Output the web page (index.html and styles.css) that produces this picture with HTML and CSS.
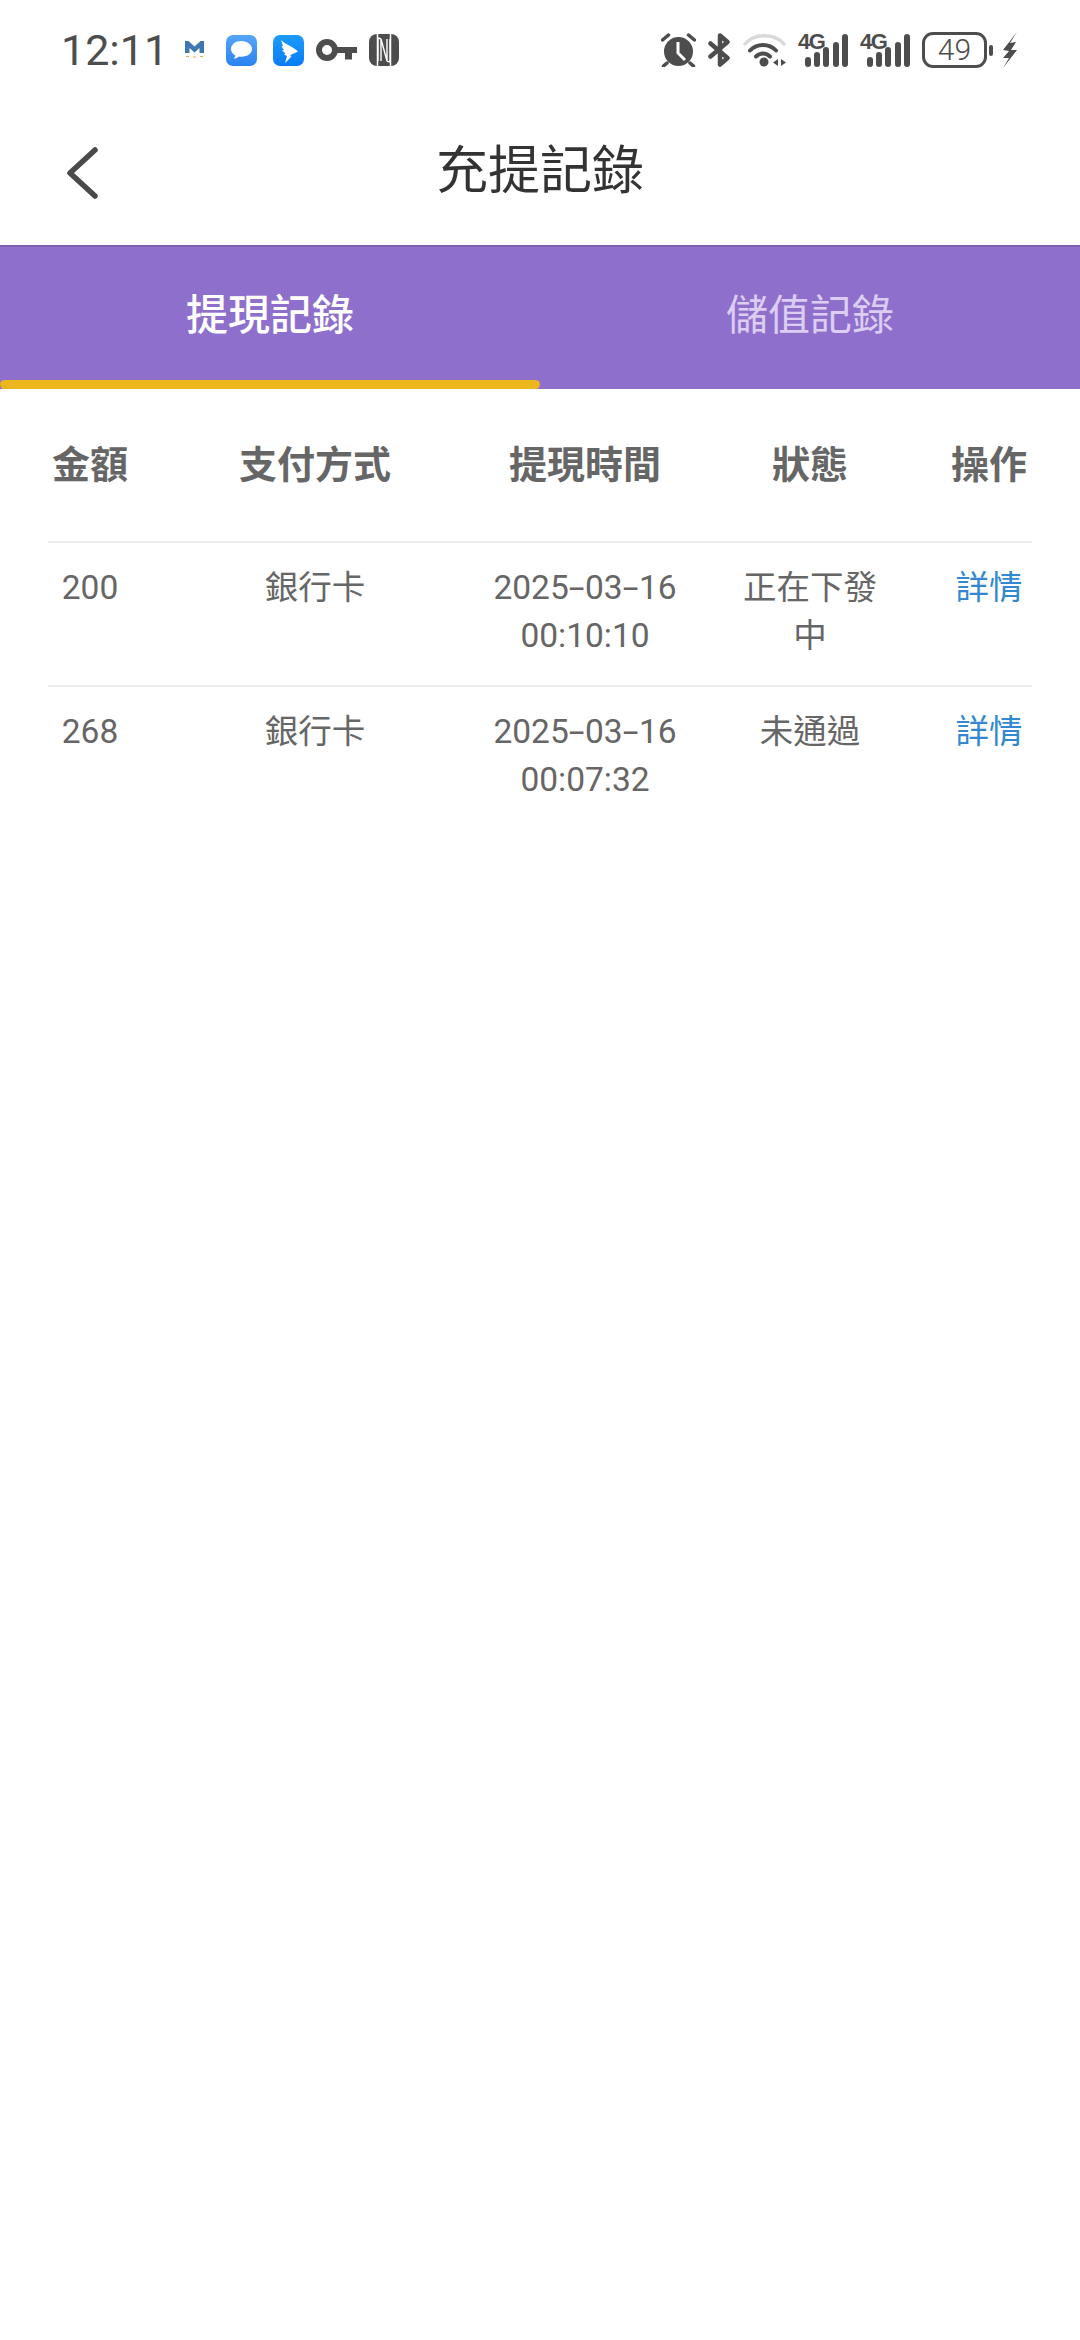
FILE: index.html
```html
<!DOCTYPE html>
<html lang="zh-Hant">
<head>
<meta charset="utf-8">
<title>充提記錄</title>
<link rel="stylesheet" href="styles.css">
</head>
<body>
<div class="status">
  <div class="status-left">
    <span class="clock">12:11</span>
    <svg class="ic-m" viewBox="0 0 19 18"><path d="M0 0h3.500L9.500 5.500 15.500 0H19v12h-4.500V7L9.500 11.500 4.500 7v5H0z" fill="#3f78b0"/><path d="M1 15.500h3M15 15.500h3M8 16h3" stroke="#e2b04a" stroke-width="1"/></svg>
    <svg class="ic-app" viewBox="0 0 31 31"><defs><linearGradient id="g1" x1="0" y1="0" x2="0" y2="1"><stop offset="0" stop-color="#55a5fa"/><stop offset="1" stop-color="#2a83f0"/></linearGradient></defs><rect width="31" height="31" rx="7" fill="url(#g1)"/><path d="M15.500 6C9.500 6 5 9.400 5 14c0 2.800 1.700 5.100 4.300 6.500-.2 1.300-.9 2.500-1.800 3.300 2.300-.2 4.200-1.100 5.500-2.300.8.200 1.600.2 2.500.2 6 0 10.500-3.400 10.500-7.700S21.500 6 15.500 6z" fill="#fff"/></svg>
    <svg class="ic-app" viewBox="0 0 31 31"><defs><linearGradient id="g2" x1="0" y1="0" x2="0" y2="1"><stop offset="0" stop-color="#1c9bfb"/><stop offset="1" stop-color="#0a7cf4"/></linearGradient></defs><rect width="31" height="31" rx="7" fill="url(#g2)"/><path d="M8 5c4 4.500 12 6.500 17 11.500l-6.500 3-1.500 1.500 1.500.5L12 28l2-7-3-1.500 1.500-1-3.500-3 2-.5-2.500-3.500 1.500-.5z" fill="#fff"/></svg>
    <svg class="ic-key" viewBox="0 0 41 24"><circle cx="11" cy="12" r="8" fill="none" stroke="#4d4d4d" stroke-width="6"/><path d="M19 9h22v6h-5v6.500h-7V15H19z" fill="#4d4d4d"/></svg>
    <svg class="ic-nfc" viewBox="0 0 30 32"><rect width="30" height="32" rx="8" fill="#4d4d4d"/><path d="M8.500 0v32M21.500 0v32" stroke="#fff" stroke-width="1.500"/><path d="M12 5v22M18 5v22M12 5l6 22M9 27V6q0-3 3-1M21 5v21q0 3-3 1" fill="none" stroke="#fff" stroke-width="1.400"/></svg>
  </div>
  <div class="status-right">
    <svg class="ic-alarm" viewBox="0 0 35 34"><circle cx="17.500" cy="18.500" r="14.500" fill="#4d4d4d"/><path d="M17 9v11l7 7" fill="none" stroke="#fff" stroke-width="3"/><path d="M1.500 7l6-5M33.500 7l-6-5M6 30l-3.500 3M29 30l3.500 3" stroke="#4d4d4d" stroke-width="3.500" stroke-linecap="round"/></svg>
    <svg class="ic-bt" viewBox="0 0 22 34"><path d="M2.500 10.500L19.500 25l-7.500 6.500V2.500L19.500 9 2.500 23.500" fill="none" stroke="#4d4d4d" stroke-width="4.500" stroke-linejoin="round" stroke-linecap="round"/></svg>
    <svg class="ic-wifi" viewBox="0 0 43 34"><path d="M2 11C11 0 32 0 41 11" fill="none" stroke="#d9d9d9" stroke-width="3.500" stroke-linecap="round"/><path d="M7 17.500c7-7.500 19-7.500 26 0M13 23.500c4-4 10-4 14 0" fill="none" stroke="#4d4d4d" stroke-width="4" stroke-linecap="round"/><circle cx="21" cy="29" r="4.500" fill="#4d4d4d"/><path d="M35 26v7l-5-3.500zM38 26v7l5-3.500z" fill="#4d4d4d"/></svg>
    <span class="net"><span class="net-label">4G</span><svg class="ic-bars" viewBox="0 0 50 34"><rect x="7" y="24" width="6" height="10" rx="3" fill="#4d4d4d"/><rect x="16" y="19" width="6" height="15" rx="3" fill="#4d4d4d"/><rect x="25" y="14" width="6" height="20" rx="3" fill="#4d4d4d"/><rect x="35" y="9" width="6" height="25" rx="3" fill="#4d4d4d"/><rect x="44" y="1" width="6" height="33" rx="3" fill="#4d4d4d"/></svg></span>
    <span class="net"><span class="net-label">4G</span><svg class="ic-bars" viewBox="0 0 50 34"><rect x="7" y="24" width="6" height="10" rx="3" fill="#4d4d4d"/><rect x="16" y="19" width="6" height="15" rx="3" fill="#4d4d4d"/><rect x="25" y="14" width="6" height="20" rx="3" fill="#4d4d4d"/><rect x="35" y="9" width="6" height="25" rx="3" fill="#4d4d4d"/><rect x="44" y="1" width="6" height="33" rx="3" fill="#4d4d4d"/></svg></span>
    <span class="battery"><span class="batt-body">49</span><span class="batt-tip"></span></span>
    <svg class="ic-bolt" viewBox="0 0 15 36"><path d="M15 0L1 18l6 1-6 7h6L1 36l14-18H9l5-8-6 1z" fill="#4d4d4d"/></svg>
  </div>
</div>

<header class="nav">
  <svg class="back" viewBox="0 0 36 60"><path d="M31 6L6 29l25 23" fill="none" stroke="#4a4a4a" stroke-width="5.500" stroke-linecap="round" stroke-linejoin="round"/></svg>
  <h1 class="title">充提記錄</h1>
</header>

<nav class="tabs">
  <div class="tab active">提現記錄</div>
  <div class="tab">儲值記錄</div>
</nav>

<section class="table">
  <div class="row head">
    <div class="c1">金額</div><div class="c2">支付方式</div><div class="c3">提現時間</div><div class="c4">狀態</div><div class="c5">操作</div>
  </div>
  <div class="row">
    <div class="c1">200</div><div class="c2">銀行卡</div><div class="c3">2025<span class="hy">-</span>03<span class="hy">-</span>16 00:10:10</div><div class="c4">正在下發中</div><div class="c5 link">詳情</div>
  </div>
  <div class="row">
    <div class="c1">268</div><div class="c2">銀行卡</div><div class="c3">2025<span class="hy">-</span>03<span class="hy">-</span>16 00:07:32</div><div class="c4">未通過</div><div class="c5 link">詳情</div>
  </div>
</section>
</body>
</html>
```
FILE: styles.css
```css
* { box-sizing: border-box; }
html, body { margin: 0; padding: 0; }
body { width: 1080px; height: 2340px; background: #fff; font-family: Roboto, "Noto Sans CJK TC", sans-serif; overflow: hidden; }

.status { height: 100px; display: flex; justify-content: space-between; align-items: center; padding: 0 63px 0 61px; }
.status-left, .status-right { display: flex; align-items: center; }
.clock { font-size: 43px; color: #4d4d4d; width: 124px; }
.ic-m { width: 19px; height: 18px; margin-right: 22px; }
.ic-app { width: 31px; height: 31px; margin-right: 16px; }
.ic-app + .ic-app { margin-right: 12px; }
.ic-key { width: 41px; height: 24px; margin-right: 12px; }
.ic-nfc { width: 30px; height: 32px; }
.ic-alarm { width: 35px; height: 34px; margin-right: 12px; }
.ic-bt { width: 22px; height: 34px; margin-right: 13px; }
.ic-wifi { width: 43px; height: 34px; margin-right: 12px; }
.net { position: relative; display: block; width: 50px; height: 34px; margin-right: 12px; }
.ic-bars { display: block; width: 50px; height: 34px; }
.net-label { position: absolute; left: 0; top: -1px; font: 700 22px/20px "Liberation Sans", sans-serif; color: #4d4d4d; letter-spacing: -1.5px; }
.battery { display: flex; align-items: center; margin-right: 9px; }
.batt-body { width: 65px; height: 36px; border: 3px solid #4d4d4d; border-radius: 11px; font-size: 30px; line-height: 30px; text-align: center; color: #4d4d4d; font-weight: 300; }
.batt-tip { width: 4px; height: 11px; margin-left: 2px; background: #4d4d4d; border-radius: 2px; }
.ic-bolt { width: 15px; height: 36px; }

.nav { height: 145px; position: relative; display: flex; align-items: center; justify-content: center; background: #fff; padding-bottom: 12px; }
.back { position: absolute; left: 64px; top: 44px; width: 36px; height: 60px; }
.title { margin: 0; font-size: 52px; font-weight: 400; color: #333; }

.tabs { height: 144px; display: flex; background: #8e70cc; border-top: 2px solid #7a5eb0; }
.tab { width: 540px; position: relative; display: flex; align-items: center; justify-content: center; padding-bottom: 14px; font-size: 42px; font-weight: 400; color: #dccdf2; }
.tab.active { color: #fff; font-weight: 500; }
.tab.active::after { content: ""; position: absolute; left: 0; right: 0; bottom: 0; height: 9px; background: #ecb61e; border-radius: 5px; }

.table { padding: 0 48px; }
.row { display: flex; font-size: 33.500px; line-height: 48px; color: #666; text-align: center; padding: 21px 0; border-top: 2px solid #eee; min-height: 144px; }
.head { border-top: 0; font-size: 38px; font-weight: 700; padding: 52px 0 0; min-height: 152px; }
.hy { display: inline-block; transform: scaleX(1.7); margin: 0 3.500px; }
.c1 { width: 84px; white-space: nowrap; }
.c2 { width: 348px; padding-left: 18px; }
.c3 { width: 220px; padding-right: 10px; }
.c4 { width: 246px; padding: 0 64px 0 38px; }
.c5 { width: 86px; white-space: nowrap; }
.link { color: #3388d0; }
```
